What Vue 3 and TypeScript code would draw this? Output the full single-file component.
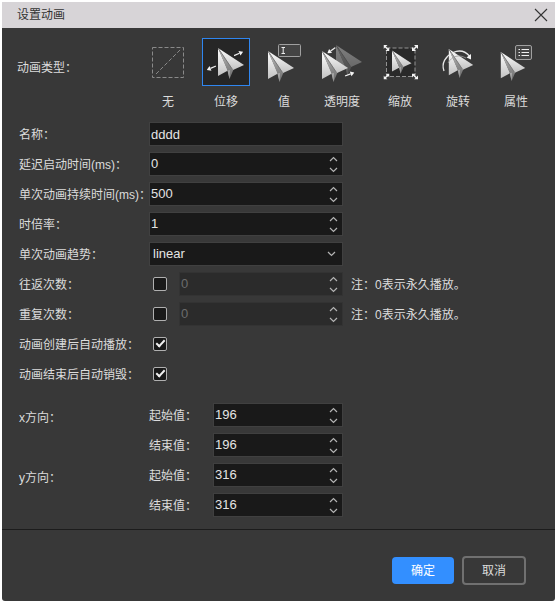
<script setup lang="ts">
import { reactive, ref } from 'vue'

type TypeKey = 'none' | 'move' | 'value' | 'opacity' | 'scale' | 'rotate' | 'attr'
type NumKey = 'delay' | 'duration' | 'rate' | 'back' | 'repeat' | 'xStart' | 'xEnd' | 'yStart' | 'yEnd'

const types: { key: TypeKey; label: string }[] = [
  { key: 'none', label: '无' },
  { key: 'move', label: '位移' },
  { key: 'value', label: '值' },
  { key: 'opacity', label: '透明度' },
  { key: 'scale', label: '缩放' },
  { key: 'rotate', label: '旋转' },
  { key: 'attr', label: '属性' },
]
const timing: { key: NumKey; label: string }[] = [
  { key: 'delay', label: '延迟启动时间(ms)：' },
  { key: 'duration', label: '单次动画持续时间(ms)：' },
  { key: 'rate', label: '时倍率：' },
]
const loops: { key: 'back' | 'repeat'; label: string }[] = [
  { key: 'back', label: '往返次数：' },
  { key: 'repeat', label: '重复次数：' },
]
const flags: { key: 'autoPlay' | 'autoDestroy'; label: string }[] = [
  { key: 'autoPlay', label: '动画创建后自动播放：' },
  { key: 'autoDestroy', label: '动画结束后自动销毁：' },
]
const axes: { name: string; fields: { key: NumKey; label: string }[] }[] = [
  { name: 'x方向：', fields: [{ key: 'xStart', label: '起始值：' }, { key: 'xEnd', label: '结束值：' }] },
  { name: 'y方向：', fields: [{ key: 'yStart', label: '起始值：' }, { key: 'yEnd', label: '结束值：' }] },
]

const selected = ref<TypeKey>('move')
const name = ref('dddd')
const trend = ref('linear')
const nums = reactive<Record<NumKey, number>>({
  delay: 0, duration: 500, rate: 1, back: 0, repeat: 0,
  xStart: 196, xEnd: 196, yStart: 316, yEnd: 316,
})
const checks = reactive({ back: false, repeat: false, autoPlay: true, autoDestroy: true })

function step(key: NumKey, delta: number): void {
  nums[key] += delta
}
</script>

<template>
  <section class="dialog" role="dialog" aria-labelledby="dialog-title">
    <svg class="defs" width="0" height="0" aria-hidden="true">
      <defs>
        <linearGradient id="wing" x1="0" y1="0" x2="0" y2="1">
          <stop offset="0" stop-color="#ffffff" />
          <stop offset="1" stop-color="#c2c2c2" />
        </linearGradient>
        <linearGradient id="fold" x1="0" y1="0" x2="0" y2="1">
          <stop offset="0" stop-color="#c4c4c4" />
          <stop offset=".6" stop-color="#8a8a8a" />
          <stop offset="1" stop-color="#6a6a6a" />
        </linearGradient>
        <symbol id="plane" viewBox="0 0 26 32">
          <path d="M0 0V28L10 22.500Z" fill="url(#wing)" />
          <path d="M0 0L9.500 22.500L11.500 31L15.500 21.500Z" fill="url(#fold)" />
          <path d="M9.500 22.500L11.500 31L12 22Z" fill="#a6a6a6" />
          <path d="M0 0L26 17L15 22Z" fill="url(#wing)" />
          <path d="M0 0L14.500 21.500" stroke="#707070" stroke-width=".9" />
        </symbol>
        <symbol id="arrow" viewBox="0 0 10 6">
          <path d="M0 3H6" stroke="#eee" stroke-width="1.3" />
          <path d="M6 .5L10 3L6 5.500Z" fill="#f4f4f4" />
        </symbol>
        <symbol id="corner" viewBox="0 0 6 6">
          <path d="M0 0H4L0 4ZM6 6H2L6 2Z" fill="#f4f4f4" />
          <path d="M1 1L5 5" stroke="#f4f4f4" stroke-width="1.4" />
        </symbol>
      </defs>
    </svg>

    <header class="titlebar">
      <h1 id="dialog-title">设置动画</h1>
      <button class="close" type="button" aria-label="关闭">
        <svg width="14" height="14" viewBox="0 0 14 14"><path d="M1 1L13 13M13 1L1 13" stroke="#333" stroke-width="1.1" /></svg>
      </button>
    </header>

    <form @submit.prevent>
      <div class="types">
        <span id="type-label" class="type-label">动画类型：</span>
        <div class="type-list" role="group" aria-labelledby="type-label">
          <button
            v-for="t in types"
            :key="t.key"
            type="button"
            class="type"
            :class="{ active: selected === t.key }"
            :aria-pressed="selected === t.key"
            @click="selected = t.key"
          >
            <span class="tile">
              <svg width="48" height="48" viewBox="0 0 48 48" fill="none" aria-hidden="true">
                <template v-if="t.key === 'none'">
                  <rect x="8.5" y="9.5" width="31" height="30" stroke="#8a8a8a" stroke-dasharray="4 2" />
                  <path d="M12 36L37 11" stroke="#8a8a8a" stroke-dasharray="4 2" />
                </template>
                <template v-else-if="t.key === 'move'">
                  <use href="#plane" x="16" y="10" width="26" height="32" />
                  <use href="#arrow" width="10" height="6" transform="translate(32 17.7) rotate(-24) translate(0 -3)" />
                  <use href="#arrow" width="10" height="6" transform="translate(14 28) rotate(157) translate(0 -3)" />
                </template>
                <template v-else-if="t.key === 'value'">
                  <use href="#plane" x="8" y="13" width="26" height="32" />
                  <rect x="18.5" y="6.5" width="22" height="12" rx="1" fill="#444" stroke="#a0a0a0" />
                  <path d="M21.5 9.5H25M21.5 15.5H25M23.2 9.5V15.5" stroke="#eee" />
                </template>
                <template v-else-if="t.key === 'opacity'">
                  <g opacity=".36"><use href="#plane" x="18" y="7" width="26" height="32" /></g>
                  <use href="#plane" x="4" y="13" width="26" height="32" />
                  <use href="#arrow" width="10" height="6" transform="translate(17.5 9.5) rotate(145) translate(0 -3)" />
                  <use href="#arrow" width="10" height="6" transform="translate(27 38) rotate(-20) translate(0 -3)" />
                </template>
                <template v-else-if="t.key === 'scale'">
                  <rect x="10.5" y="10" width="28.5" height="28.5" fill="#292929" stroke="#929292" stroke-dasharray="4 2" />
                  <use href="#plane" x="15.5" y="12.5" width="20.5" height="24" />
                  <use href="#corner" x="7.5" y="7" width="6" height="6" />
                  <use href="#corner" x="36" y="35.5" width="6" height="6" />
                  <use href="#corner" width="6" height="6" transform="translate(42 7) scale(-1 1)" />
                  <use href="#corner" width="6" height="6" transform="translate(13.5 35.5) scale(-1 1)" />
                </template>
                <template v-else-if="t.key === 'rotate'">
                  <path d="M10 33C7 25 12 18 18 15" stroke="#e8e8e8" stroke-width="1.3" />
                  <use href="#plane" x="14" y="11" width="26" height="30" />
                  <path d="M14 25C18 18 25 16 32 20" stroke="#999" stroke-width=".8" />
                  <path d="M19 14.5C26 11.5 32 14 35.5 18" stroke="#e8e8e8" stroke-width="1.3" />
                  <path d="M32.5 19.5L37 16L37 21.5Z" fill="#f4f4f4" />
                </template>
                <template v-else>
                  <use href="#plane" x="8" y="14" width="26" height="30" />
                  <rect x="23.5" y="7.5" width="16" height="14" rx="1.5" fill="#444" stroke="#a0a0a0" />
                  <path d="M26.5 11.5H28M29.5 11.5H37M26.5 14.5H28M29.5 14.5H37M26.5 17.5H28M29.5 17.5H37" stroke="#eee" />
                </template>
              </svg>
            </span>
            <span>{{ t.label }}</span>
          </button>
        </div>
      </div>

      <div class="rows">
        <div class="row">
          <label for="name">名称：</label>
          <input id="name" v-model="name" class="field" type="text" />
        </div>
        <div v-for="f in timing" :key="f.key" class="row">
          <label :for="f.key">{{ f.label }}</label>
          <div class="field spin">
            <input :id="f.key" v-model.number="nums[f.key]" type="number" />
            <span class="steps">
              <button type="button" aria-label="增加" @click="step(f.key, 1)"><svg width="9" height="6" viewBox="0 0 9 6"><path d="M1 5L4.500 1.500L8 5" /></svg></button>
              <button type="button" aria-label="减少" @click="step(f.key, -1)"><svg width="9" height="6" viewBox="0 0 9 6"><path d="M1 1L4.500 4.500L8 1" /></svg></button>
            </span>
          </div>
        </div>
        <div class="row">
          <label for="trend">单次动画趋势：</label>
          <div class="field pick">
            <select id="trend" v-model="trend">
              <option value="linear">linear</option>
            </select>
            <svg width="9" height="6" viewBox="0 0 9 6" aria-hidden="true"><path d="M1 1L4.500 4.500L8 1" /></svg>
          </div>
        </div>
        <div v-for="l in loops" :key="l.key" class="row">
          <label :for="l.key + '-on'">{{ l.label }}</label>
          <div class="loop">
            <input :id="l.key + '-on'" v-model="checks[l.key]" class="check" type="checkbox" />
            <div class="field spin" :class="{ disabled: !checks[l.key] }">
              <input v-model.number="nums[l.key]" type="number" :aria-label="l.label" :disabled="!checks[l.key]" />
              <span class="steps">
                <button type="button" aria-label="增加" :disabled="!checks[l.key]" @click="step(l.key, 1)"><svg width="9" height="6" viewBox="0 0 9 6"><path d="M1 5L4.500 1.500L8 5" /></svg></button>
                <button type="button" aria-label="减少" :disabled="!checks[l.key]" @click="step(l.key, -1)"><svg width="9" height="6" viewBox="0 0 9 6"><path d="M1 1L4.500 4.500L8 1" /></svg></button>
              </span>
            </div>
          </div>
          <span class="note">注：0表示永久播放。</span>
        </div>
        <div v-for="c in flags" :key="c.key" class="row">
          <label :for="c.key">{{ c.label }}</label>
          <div class="loop"><input :id="c.key" v-model="checks[c.key]" class="check" type="checkbox" /></div>
        </div>
      </div>

      <div class="axes">
        <div v-for="a in axes" :key="a.name" class="axis" role="group" :aria-label="a.name">
          <span class="axis-name">{{ a.name }}</span>
          <div>
            <div v-for="f in a.fields" :key="f.key" class="axis-row">
              <label :for="f.key">{{ f.label }}</label>
              <div class="field spin">
                <input :id="f.key" v-model.number="nums[f.key]" type="number" />
                <span class="steps">
                  <button type="button" aria-label="增加" @click="step(f.key, 1)"><svg width="9" height="6" viewBox="0 0 9 6"><path d="M1 5L4.500 1.500L8 5" /></svg></button>
                  <button type="button" aria-label="减少" @click="step(f.key, -1)"><svg width="9" height="6" viewBox="0 0 9 6"><path d="M1 1L4.500 4.500L8 1" /></svg></button>
                </span>
              </div>
            </div>
          </div>
        </div>
      </div>

      <footer class="actions">
        <button type="submit" class="btn ok">确定</button>
        <button type="button" class="btn cancel">取消</button>
      </footer>
    </form>
  </section>
</template>

<style>
body {
  background: #fff;
}
</style>

<style scoped>
.dialog,
.dialog * {
  box-sizing: border-box;
}
.dialog {
  margin: 2px 4px 5px 2px;
  background: #383838;
  color: #dcdcdc;
  font: 12px/16px "Liberation Sans", "Noto Sans CJK SC", sans-serif;
  border-radius: 0 0 3px 3px;
}
.defs {
  position: absolute;
}
button,
input,
select {
  font: inherit;
  color: inherit;
  margin: 0;
  padding: 0;
  border: 0;
  background: none;
}
svg {
  display: block;
}
.titlebar {
  display: flex;
  align-items: center;
  justify-content: space-between;
  height: 26px;
  padding: 0 7px 0 15px;
  background: #d7d4d7;
  color: #333;
}
.titlebar h1 {
  margin: 0;
  font: inherit;
}
.types {
  display: flex;
  padding: 10px 15px 0;
}
.type-label {
  width: 127px;
  padding-top: 22px;
}
.type-list {
  display: flex;
  gap: 10px;
}
.type {
  display: flex;
  flex-direction: column;
  align-items: center;
  gap: 8px;
  width: 48px;
}
.active .tile {
  background: #262626;
  box-shadow: inset 0 0 0 1px #2f86f0;
}
.rows {
  padding: 9px 17px 0;
}
.row,
.axis {
  display: grid;
  grid-template-columns: 130px 194px 1fr;
}
.row {
  align-items: center;
  height: 30px;
}
label {
  padding-top: 1px;
  white-space: nowrap;
}
.field {
  width: 100%;
  min-width: 0;
  height: 24px;
  border: 1px solid #404040;
  background: #191919;
  color: #e4e4e4;
  font-size: 13px;
}
input.field {
  padding: 0 1px;
}
.spin {
  display: flex;
  align-items: center;
  padding-left: 1px;
}
.spin input {
  flex: 1;
  width: 0;
  min-width: 0;
  appearance: textfield;
}
.spin input::-webkit-inner-spin-button {
  appearance: none;
  margin: 0;
}
.steps {
  display: flex;
  flex: none;
  flex-direction: column;
  width: 18px;
}
.steps button {
  display: flex;
  align-items: center;
  justify-content: center;
  height: 11px;
}
.steps path,
.pick path {
  fill: none;
  stroke: #b4b4b4;
  stroke-width: 1.2;
}
.disabled {
  background: #2b2b2b;
  border-color: #333;
  color: #6c6c6c;
}
.pick {
  display: grid;
  align-items: center;
}
.pick select {
  grid-area: 1 / 1;
  width: 100%;
  height: 22px;
  padding-left: 3px;
  appearance: none;
}
.pick option {
  background: #191919;
}
.pick svg {
  grid-area: 1 / 1;
  justify-self: end;
  margin-right: 6px;
  pointer-events: none;
}
.loop {
  display: flex;
  align-items: center;
  gap: 12px;
  padding-left: 4px;
}
.check {
  display: grid;
  place-items: center;
  flex: none;
  width: 14px;
  height: 14px;
  border: 1px solid #b0b0b0;
  border-radius: 2px;
  background: #191919;
  appearance: none;
}
.check:checked::before {
  content: "";
  box-sizing: border-box;
  width: 9px;
  height: 5px;
  margin-bottom: 3px;
  border: solid #f0f0f0;
  border-width: 0 0 2px 2px;
  transform: rotate(-47deg);
}
.note {
  padding: 1px 0 0 8px;
}
.axes {
  padding: 11px 17px 9px;
  border-bottom: 1px solid #1c1c1c;
}
.axis-name {
  padding-top: 10px;
}
.axis-row {
  display: grid;
  grid-template-columns: 64px minmax(0, 1fr);
  align-items: center;
  height: 30px;
}
.actions {
  display: flex;
  align-items: center;
  justify-content: flex-end;
  gap: 8px;
  padding: 26px 29px 16px;
}
.btn {
  width: 64px;
  height: 29px;
  border-radius: 4px;
}
.ok {
  width: 62px;
  height: 27px;
  background: #338fff;
  color: #fff;
}
.cancel {
  border: 2px solid #707070;
}
</style>
